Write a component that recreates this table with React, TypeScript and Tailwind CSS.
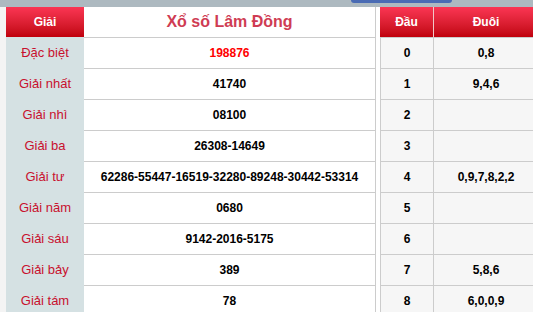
import React from "react";

const rows: [string, string, string, string][] = [
  ["Đặc biệt", "198876", "0", "0,8"],
  ["Giải nhất", "41740", "1", "9,4,6"],
  ["Giải nhì", "08100", "2", ""],
  ["Giải ba", "26308-14649", "3", ""],
  ["Giải tư", "62286-55447-16519-32280-89248-30442-53314", "4", "0,9,7,8,2,2"],
  ["Giải năm", "0680", "5", ""],
  ["Giải sáu", "9142-2016-5175", "6", ""],
  ["Giải bảy", "389", "7", "5,8,6"],
  ["Giải tám", "78", "8", "6,0,0,9"],
];

export default function App() {
  return (
    <div
      className="w-[533px] h-[312px] overflow-hidden bg-[#f4f4f4]"
      style={{ fontFamily: '"Liberation Sans", Arial, sans-serif' }}
    >
      <div className="h-[7px] bg-[#adb9c0] flex">
        <div className="w-[351px]" />
        <div className="w-[101px] h-[3px] rounded-b-[3px] bg-[#4a6bb4]" />
      </div>
      <div className="pl-[6px] w-[600px]">
        <div className="flex h-[30px]">
          <div className="w-[78px] shrink-0 flex items-center justify-center bg-linear-to-b from-[#fb3553] to-[#c0000a] text-white font-bold text-[12px]">
            Giải
          </div>
          <div className="w-[292px] shrink-0 bg-white border-r border-[#cccccc] flex items-center justify-center text-[16px] font-bold text-[#cf3c53]">
            Xổ số Lâm Đồng
          </div>
          <div className="w-[4px] shrink-0 bg-white" />
          <div className="w-[53px] shrink-0 flex items-center justify-center bg-linear-to-b from-[#fb3553] to-[#c0000a] text-white font-bold text-[12px]">
            Đầu
          </div>
          <div className="w-[105px] shrink-0 flex items-center justify-center border-l border-[#f0c8c8] bg-linear-to-b from-[#fb3553] to-[#c0000a] text-white font-bold text-[12px]">
            Đuôi
          </div>
        </div>
        {rows.map(([label, num, dau, duoi], i) => (
          <div key={i} className="flex h-[31px]">
            <div className="w-[78px] shrink-0 flex items-center justify-center bg-[#d5e1e3] text-[13px] text-[#c8102e]">
              {label}
            </div>
            <div
              className={
                i === 0
                  ? "w-[292px] shrink-0 bg-white border-t border-r border-[#cccccc] flex items-center justify-center text-[12px] font-bold text-[#ff0000]"
                  : "w-[292px] shrink-0 bg-white border-t border-r border-[#cccccc] flex items-center justify-center text-[12px] font-bold text-black"
              }
            >
              {num}
            </div>
            <div className="w-[4px] shrink-0 bg-white" />
            <div className="w-[53px] shrink-0 bg-[#f6f6f6] border-t border-l border-[#cccccc] flex items-center justify-center text-[12px] font-bold text-black">
              {dau}
            </div>
            <div className="w-[105px] shrink-0 bg-[#f6f6f6] border-t border-l border-[#cccccc] flex items-center justify-center text-[12px] font-bold text-black">
              {duoi}
            </div>
          </div>
        ))}
      </div>
    </div>
  );
}
